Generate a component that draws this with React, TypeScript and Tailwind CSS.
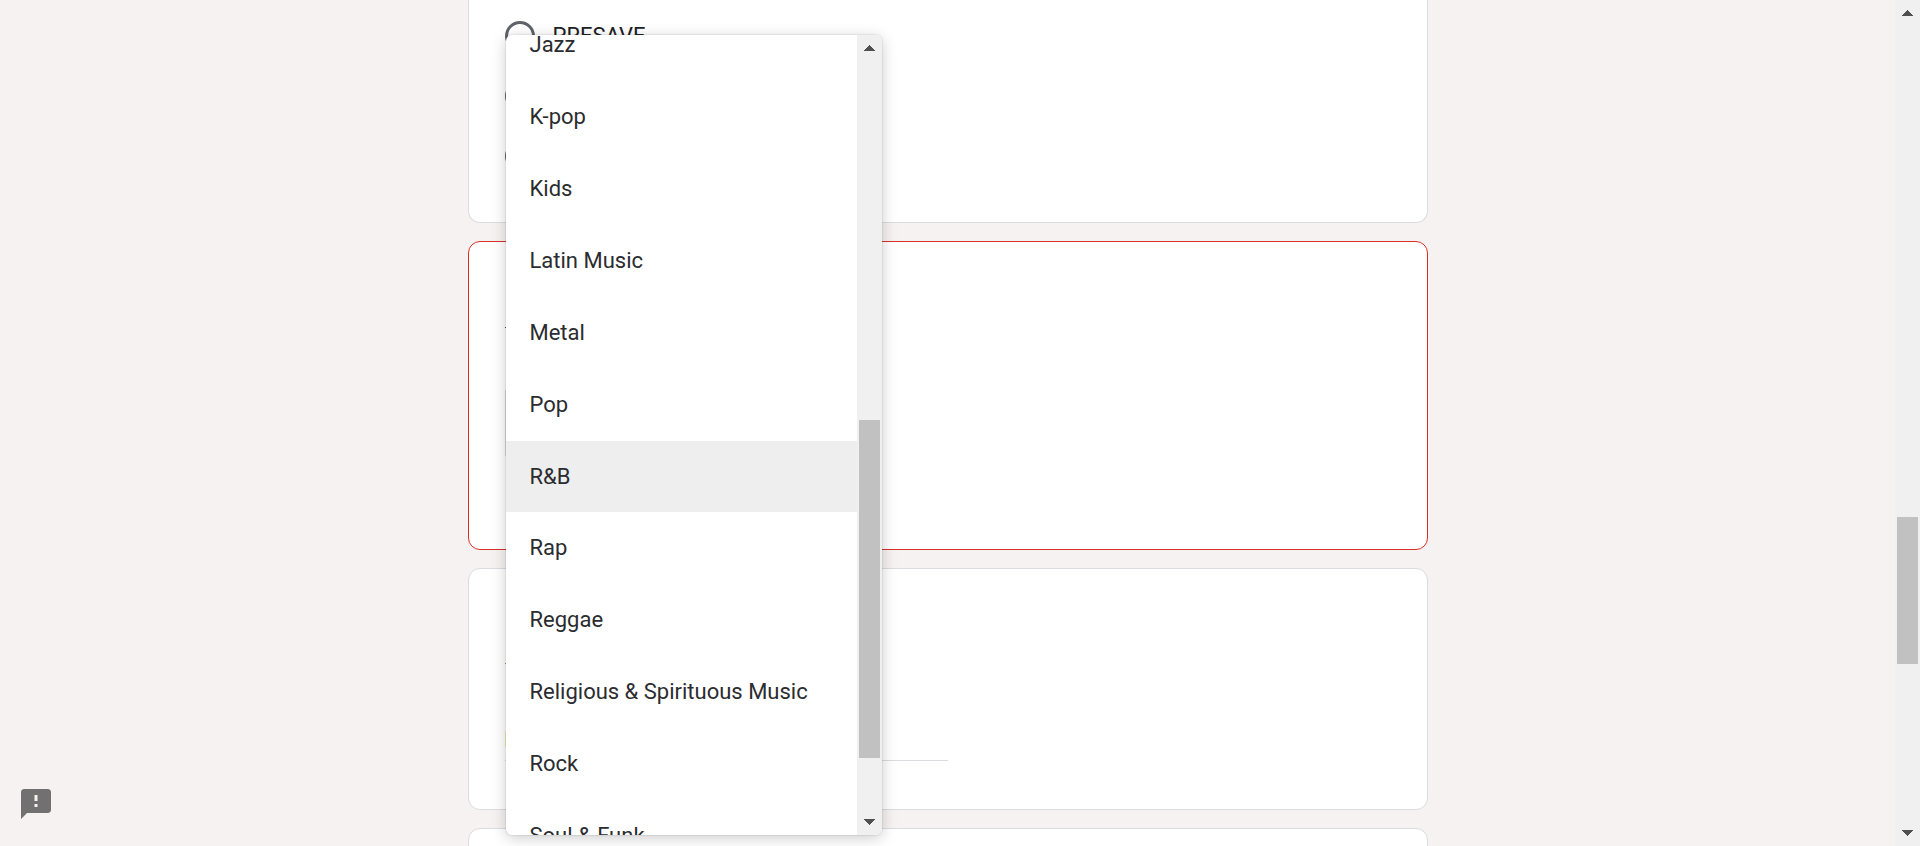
import { useState } from "react";
import { MdFeedback } from "react-icons/md";

const genres = [
  "Jazz",
  "K-pop",
  "Kids",
  "Latin Music",
  "Metal",
  "Pop",
  "R&B",
  "Rap",
  "Reggae",
  "Religious & Spirituous Music",
  "Rock",
  "Soul & Funk",
];

const releaseTypes = ["PRESAVE", "", ""];

function Arrow({ down = false }: { down?: boolean }) {
  return (
    <svg
      width="11"
      height="6"
      viewBox="0 0 11 6"
      shapeRendering="crispEdges"
      className="shrink-0 fill-[#505050]"
      aria-hidden="true"
    >
      <path
        d={
          down
            ? "M0 0h11v1h-1v1h-1v1h-1v1h-1v1h-1v1h-1v-1h-1v-1h-1v-1h-1v-1h-1v-1h-1z"
            : "M0 6h11v-1h-1v-1h-1v-1h-1v-1h-1v-1h-1v-1h-1v1h-1v1h-1v1h-1v1h-1v1h-1z"
        }
      />
    </svg>
  );
}

function ReleaseTypeCard() {
  return (
    <section className="flex flex-col gap-[30px] rounded-b-xl border border-t-0 border-[#dadce0] bg-white px-9 pt-[21px] pb-[51px]">
      {releaseTypes.map((label, i) => (
        <label key={i} className="flex h-[30px] items-center gap-[18px] text-[22px]">
          <input
            type="radio"
            name="release-type"
            className="size-[30px] shrink-0 appearance-none rounded-full border-[3px] border-[#5f6368] bg-white"
          />
          {label}
        </label>
      ))}
    </section>
  );
}

function GenreMenu({ selected, onSelect }: { selected: string; onSelect: (g: string) => void }) {
  return (
    <div className="absolute -top-[354px] left-px z-10 flex h-[800px] w-[376px] overflow-hidden rounded-md bg-white text-[#2b2c2f] shadow-[0_3px_15px_rgba(0,0,0,0.2),0_0_2px_rgba(0,0,0,0.2)]">
      <div role="listbox" aria-label="Genre" className="-mt-[26px] flex-1">
        {genres.map((g) => (
          <button
            key={g}
            type="button"
            role="option"
            aria-selected={g === selected}
            onClick={() => onSelect(g)}
            className={
              g === selected
                ? "flex h-[71px] w-full items-center bg-[#eeeeee] px-6 text-left"
                : "flex h-[72px] w-full items-center px-6 text-left"
            }
          >
            {g}
          </button>
        ))}
      </div>
      <div className="flex w-[25px] flex-col items-center bg-[#f0f0f0] py-2.5">
        <Arrow />
        <div className="flex-[369] basis-0" />
        <div className="h-[338px] w-[21px] shrink-0 bg-[#c1c1c1]" />
        <div className="flex-[61] basis-0" />
        <Arrow down />
      </div>
    </div>
  );
}

function GenreCard() {
  const [genre, setGenre] = useState("R&B");
  return (
    <section className="h-[309px] rounded-xl border border-[#d93025] bg-white px-9 pt-[85px]">
      <div className="h-px w-2 bg-[#6b3a1e]" />
      <div className="relative mt-[61px]">
        <button
          type="button"
          aria-haspopup="listbox"
          aria-label="Genre"
          className="block h-[68px] w-[300px] rounded-xs border border-[#dadce0] bg-white"
        />
        <GenreMenu selected={genre} onSelect={setGenre} />
      </div>
    </section>
  );
}

function AnswerCard() {
  return (
    <section className="h-[242px] rounded-xl border border-[#dadce0] bg-white px-9 pt-[94px]">
      <div className="h-px w-2 bg-[#b08a4a]" />
      <div className="mt-[54px] flex h-[43px] w-1/2 flex-col justify-center border-b border-[#dadce0]">
        <input
          type="text"
          aria-label="Answer"
          className="block h-4 w-[300px] bg-[#f3f3b4] text-base outline-none"
        />
      </div>
    </section>
  );
}

export default function App() {
  return (
    <div className="flex h-screen overflow-hidden bg-[#f6f2f1] font-[Roboto,sans-serif] text-[22px] leading-8 text-[#202124]">
      <main className="flex-1 overflow-hidden">
        <form className="mx-auto flex max-w-[960px] flex-col gap-[18px]">
          <ReleaseTypeCard />
          <GenreCard />
          <AnswerCard />
          <section className="h-[240px] rounded-xl border border-[#dadce0] bg-white" />
        </form>
      </main>
      <div className="flex w-[25px] flex-col items-center bg-[#f0f0f0] py-2.5">
        <Arrow />
        <div className="flex-[501] basis-0" />
        <div className="h-[147px] w-[21px] shrink-0 bg-[#c1c1c1]" />
        <div className="flex-[166] basis-0" />
        <Arrow down />
      </div>
      <button
        type="button"
        aria-label="Feedback"
        className="fixed bottom-6 left-[18px] text-[#727070]"
      >
        <MdFeedback size={36} />
      </button>
    </div>
  );
}
